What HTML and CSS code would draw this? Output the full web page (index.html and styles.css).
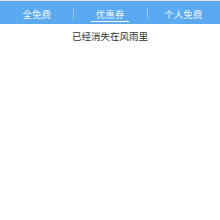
FILE: index.html
```html
<!DOCTYPE html>
<html lang="zh">
<head>
    <meta charset="UTF-8">
    <meta name="viewport" content="width=device-width, initial-scale=1.0">
    <title>优惠券</title>
    <link rel="stylesheet" href="styles.css">
</head>
<body>
    <div class="tabs">
        <div class="tab">全免费</div>
        <div class="tab active">优惠券</div>
        <div class="tab">个人免费</div>
    </div>
    <p class="empty">已经消失在风雨里</p>
</body>
</html>
```

FILE: styles.css
```css
body {
    margin: 0;
    background-color: #fff;
    font-family: "Noto Sans CJK SC", "Noto Sans", sans-serif;
    border-top: 1px solid #e6e6e6;
}
.tabs {
    display: flex;
    height: 23px;
    background-color: #5ba9f1;
}
.tab {
    flex: 1;
    position: relative;
    display: flex;
    justify-content: center;
    align-items: center;
    padding-top: 3px;
    color: #eef6ff;
    font-size: 9.5px;
}
.tab + .tab::before {
    content: "";
    position: absolute;
    left: 0;
    top: 7px;
    height: 11px;
    width: 1px;
    background-color: #9ccbf7;
}
.active::after {
    content: "";
    position: absolute;
    left: 50%;
    bottom: 2px;
    width: 38px;
    height: 1.5px;
    margin-left: -19px;
    background-color: #fff;
}
.empty {
    margin: 5px 0 0;
    text-align: center;
    font-size: 9.5px;
    color: #333;
}
```
